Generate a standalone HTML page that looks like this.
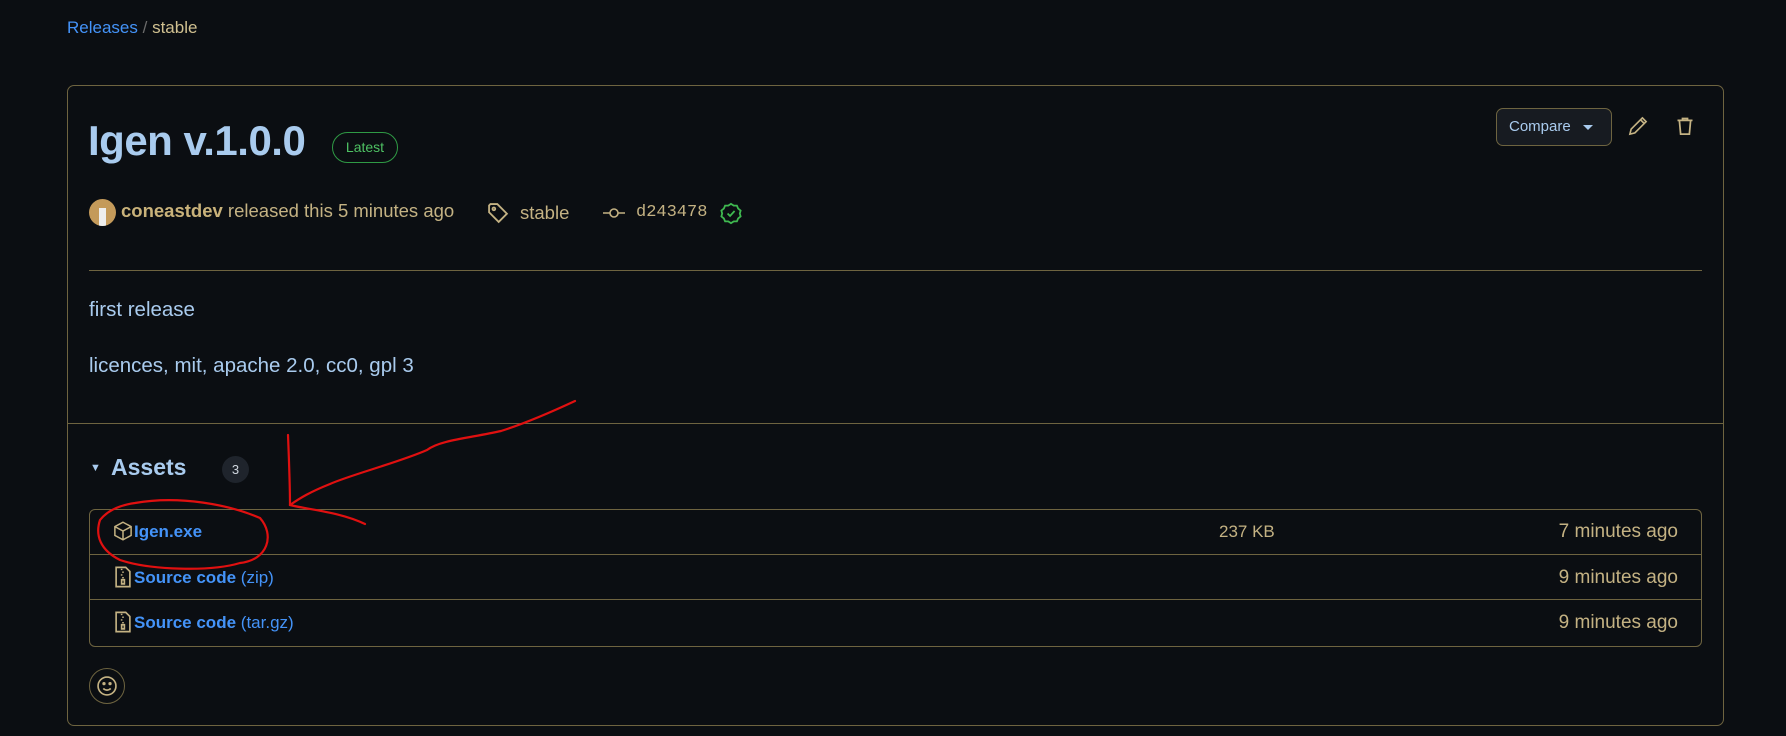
<!DOCTYPE html>
<html><head><meta charset="utf-8"><style>
*{box-sizing:border-box;margin:0;padding:0}
body{width:1786px;height:736px;background:#0b0e12;font-family:"Liberation Sans",sans-serif;position:relative;overflow:hidden;color:#c4b283}
.a{position:absolute;white-space:nowrap}
.card{position:absolute;left:67px;top:85px;width:1657px;height:641px;border:1px solid #6e6440;border-radius:7px}
.blue{color:#4493f8}
.lb{color:#a9cbee}
</style></head><body>
<div class="a" style="left:67px;top:18px;font-size:17px"><span class="blue">Releases</span> <span style="color:#6b6b6b">/</span> <span style="color:#d0c090">stable</span></div>
<div class="card"></div>
<div class="a lb" style="left:88px;top:117px;font-size:42px;font-weight:bold;letter-spacing:-0.5px">Igen v.1.0.0</div>
<div class="a" style="left:332px;top:132px;width:66px;height:31px;border:1px solid #2f9a45;border-radius:16px;color:#4ec163;font-size:14px;text-align:center;line-height:29px">Latest</div>
<div class="a" style="left:1496px;top:108px;width:116px;height:38px;border:1px solid #6e6440;border-radius:7px;background:#171b21;color:#a9cbee;font-size:15px;line-height:36px;padding-left:12px">Compare <span style="display:inline-block;margin-left:8px;border-left:5px solid transparent;border-right:5px solid transparent;border-top:5px solid #a9cbee;vertical-align:middle"></span></div>
<svg class="a" style="left:1628px;top:116px" width="20" height="20" viewBox="0 0 16 16" fill="none" stroke="#c4b283" stroke-width="1.3"><path d="M11.5 1.5l3 3-9 9-4 1 1-4z M10 3l3 3"/></svg>
<svg class="a" style="left:1675px;top:115px" width="20" height="22" viewBox="0 0 16 16" fill="none" stroke="#c4b283" stroke-width="1.4"><path d="M2 3.5h12M6 3.5V2h4v1.5M3.5 3.5l1 11h7l1-11"/></svg>
<div class="a" style="left:89px;top:199px;width:27px;height:27px;border-radius:50%;background:#c49a5a;overflow:hidden"><div style="position:absolute;left:10px;top:9px;width:7px;height:18px;background:#eee"></div></div>
<div class="a" style="left:121px;top:200px;font-size:18.5px"><b style="color:#c9b27a">coneastdev</b> released this 5 minutes ago</div>
<svg class="a" style="left:487px;top:202px" width="22" height="22" viewBox="0 0 16 16" fill="none" stroke="#c4b283" stroke-width="1.3"><path d="M1.5 2.5v5l7 7 6-6-7-7h-5z"/><circle cx="5" cy="5" r="1"/></svg>
<div class="a" style="left:520px;top:202px;font-size:18.5px">stable</div>
<svg class="a" style="left:602px;top:204px" width="24" height="18" viewBox="0 0 24 18" fill="none" stroke="#c4b283" stroke-width="1.6"><circle cx="12" cy="9" r="4"/><path d="M1 9h7M16 9h7"/></svg>
<div class="a" style="left:636px;top:203px;font-size:17px;font-family:'Liberation Mono',monospace">d243478</div>
<svg class="a" style="left:720px;top:202px" width="22" height="23" viewBox="0 0 16 16" fill="none" stroke="#3fb950" stroke-width="1.3"><path d="M8 1l2 1.3 2.3 0 .9 2.1 1.8 1.5-.6 2.1.6 2.1-1.8 1.5-.9 2.1H10L8 15l-2-1.3H3.7l-.9-2.1L1 10.1 1.6 8 1 5.9l1.8-1.5.9-2.1H6z"/><path d="M5.5 8l1.8 1.8 3.3-3.6"/></svg>
<div class="a" style="left:89px;top:270px;width:1613px;height:1px;background:#6e6440"></div>
<div class="a lb" style="left:89px;top:298px;font-size:20.5px">first release</div>
<div class="a lb" style="left:89px;top:354px;font-size:20.5px">licences, mit, apache 2.0, cc0, gpl 3</div>
<div class="a" style="left:67px;top:423px;width:1657px;height:1px;background:#6e6440"></div>
<div class="a lb" style="left:90px;top:462px;font-size:11px">▼</div>
<div class="a lb" style="left:111px;top:454px;font-size:23px;font-weight:bold">Assets</div>
<div class="a" style="left:222px;top:456px;width:27px;height:27px;border-radius:50%;background:#1f242c;color:#cfd6de;font-size:13px;text-align:center;line-height:27px">3</div>
<div class="a" style="left:89px;top:509px;width:1613px;height:138px;border:1px solid #6e6440;border-radius:6px"></div>
<div class="a" style="left:89px;top:554px;width:1613px;height:1px;background:#6e6440"></div>
<div class="a" style="left:89px;top:599px;width:1613px;height:1px;background:#6e6440"></div>
<svg class="a" style="left:113px;top:520px" width="20" height="22" viewBox="0 0 16 16" fill="none" stroke="#c4b283" stroke-width="1.2"><path d="M8 1l6.5 3.5v7L8 15l-6.5-3.5v-7z M1.5 4.5L8 8l6.5-3.5 M8 8v7"/></svg>
<div class="a blue" style="left:134px;top:522px;font-size:17px;font-weight:bold">Igen.exe</div>
<div class="a" style="left:1219px;top:522px;font-size:17px">237 KB</div>
<div class="a" style="left:1478px;top:521px;width:200px;text-align:right;font-size:19px">7 minutes ago</div>
<svg class="a" style="left:114px;top:566px" width="18" height="22" viewBox="0 0 12 16" fill="none" stroke="#c4b283" stroke-width="1.2"><path d="M1 1h7l3 3v11H1z M5 2v1M6 4v1M5 6v1M6 8v1M5 10h2v3H5z"/></svg>
<div class="a" style="left:134px;top:568px;font-size:17px"><b class="blue">Source code</b> <span class="blue">(zip)</span></div>
<div class="a" style="left:1478px;top:567px;width:200px;text-align:right;font-size:19px">9 minutes ago</div>
<svg class="a" style="left:114px;top:611px" width="18" height="22" viewBox="0 0 12 16" fill="none" stroke="#c4b283" stroke-width="1.2"><path d="M1 1h7l3 3v11H1z M5 2v1M6 4v1M5 6v1M6 8v1M5 10h2v3H5z"/></svg>
<div class="a" style="left:134px;top:613px;font-size:17px"><b class="blue">Source code</b> <span class="blue">(tar.gz)</span></div>
<div class="a" style="left:1478px;top:612px;width:200px;text-align:right;font-size:19px">9 minutes ago</div>
<div class="a" style="left:89px;top:668px;width:36px;height:36px;border-radius:50%;border:1px solid #6e6440"></div>
<svg class="a" style="left:96px;top:675px" width="22" height="22" viewBox="0 0 16 16" fill="none" stroke="#c4b283" stroke-width="1.2"><circle cx="8" cy="8" r="6.5"/><path d="M5.3 9.8c1.5 1.6 3.9 1.6 5.4 0"/><circle cx="5.8" cy="6.3" r=".6" fill="#c4b283"/><circle cx="10.2" cy="6.3" r=".6" fill="#c4b283"/></svg>
<svg class="a" style="left:0;top:0" width="1786" height="736" fill="none" stroke="#e01010" stroke-width="2.2" stroke-linecap="round">
<path d="M575 401 C545 415 520 425 501 431 C470 438 440 440 427 450 C400 462 350 475 330 484 C310 492 300 498 290 505"/>
<path d="M288 435 C289 460 290 485 290 505 C310 510 340 512 365 524"/>
<path d="M135 503 C180 495 230 505 260 518 C275 535 268 560 240 563 C210 572 150 570 120 560 C100 550 95 535 100 520 C108 510 120 505 135 503Z"/>
</svg>
</body></html>
